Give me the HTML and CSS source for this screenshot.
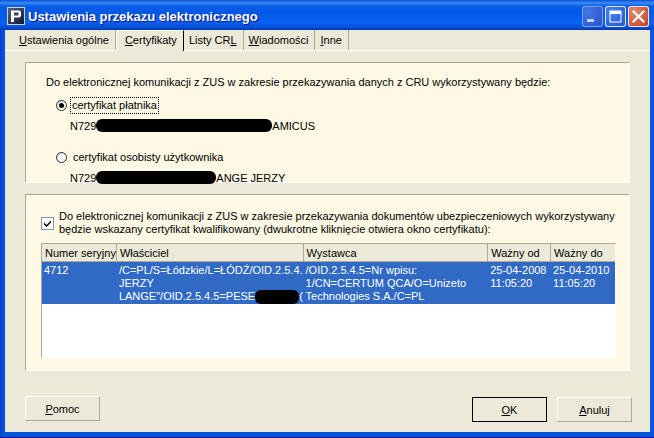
FILE: index.html
```
<!DOCTYPE html>
<html lang="pl">
<head>
<meta charset="utf-8">
<title>Ustawienia przekazu elektronicznego</title>
<link rel="stylesheet" href="styles.css">
</head>
<body>
<div class="window">
  <header class="titlebar">
    <svg class="app-icon" width="18" height="18" viewBox="0 0 18 18"><defs><linearGradient id="g" x1="0" y1="0" x2="1" y2="1"><stop offset="0" stop-color="#5a6a84"/><stop offset="1" stop-color="#0c1626"/></linearGradient></defs><rect x="0.5" y="0.5" width="17" height="17" fill="url(#g)" stroke="#c8d4ea"/><path d="M4 3.5h8.5l1.5 1.5v4l-1.5 1.5H7V15H4zM7 5.5v3h4.5v-3z" fill="#fff" fill-rule="evenodd"/></svg>
    <h1 class="title">Ustawienia przekazu elektronicznego</h1>
    <div class="controls">
      <span class="ctl ctl-min"><svg width="21" height="21" viewBox="0 0 21 21"><rect x="5" y="13" width="7" height="3" fill="#c3d0f2"/></svg></span>
      <span class="ctl ctl-max"><svg width="21" height="21" viewBox="0 0 21 21"><rect x="5" y="5" width="11" height="11" fill="none" stroke="#fff"/><rect x="5" y="5" width="11" height="3" fill="#fff"/></svg></span>
      <span class="ctl ctl-close"><svg width="21" height="21" viewBox="0 0 21 21"><path d="M5.5 5.5l10 10M15.5 5.5l-10 10" stroke="#fff" stroke-width="2.2" stroke-linecap="square"/></svg></span>
    </div>
  </header>
  <main class="client">
    <nav class="tabs">
      <span class="tab"><u>U</u>stawienia ogólne</span>
      <span class="tab tab-active"><u>C</u>ertyfikaty</span>
      <span class="tab">Listy CR<u>L</u></span>
      <span class="tab"><u>W</u>iadomości</span>
      <span class="tab"><u>I</u>nne</span>
    </nav>
    <div class="page">
      <section class="panel panel-top">
        <p class="lead">Do elektronicznej komunikacji z ZUS w zakresie przekazywania danych z CRU wykorzystywany będzie:</p>
        <div class="radio-row">
          <span class="radio radio-on"></span>
          <span class="focus">certyfikat płatnika</span>
        </div>
        <div class="cert">N729<span class="blot blot-a"></span>AMICUS</div>
        <div class="radio-row radio-row-2">
          <span class="radio"></span>
          <span class="plain">certyfikat osobisty użytkownika</span>
        </div>
        <div class="cert">N729<span class="blot blot-b"></span>ANGE JERZY</div>
      </section>
      <section class="panel panel-bottom">
        <div class="check-row">
          <span class="check"><svg width="9" height="9" viewBox="0 0 9 9"><path d="M1 3.5l2.5 2.5L8 1.5v2L3.5 8 1 5.5z" fill="#000"/></svg></span>
          <p class="check-text">Do elektronicznej komunikacji z ZUS w zakresie przekazywania dokumentów ubezpieczeniowych wykorzystywany<br>będzie wskazany certyfikat kwalifikowany (dwukrotne kliknięcie otwiera okno certyfikatu):</p>
        </div>
        <div class="list">
          <div class="list-head">
            <span class="th c1">Numer seryjny</span>
            <span class="th c2">Właściciel</span>
            <span class="th c3">Wystawca</span>
            <span class="th c4">Ważny od</span>
            <span class="th c5">Ważny do</span>
          </div>
          <div class="list-row">
            <span class="td c1">4712</span>
            <span class="td c2">/C=PL/S=Łódzkie/L=ŁÓDŹ/OID.2.5.4.<br>JERZY<br>LANGE"/OID.2.5.4.5=PESE<span class="blot blot-c"></span>(</span>
            <span class="td c3">/OID.2.5.4.5=Nr wpisu:<br>1/CN=CERTUM QCA/O=Unizeto<br>Technologies S.A./C=PL</span>
            <span class="td c4">25-04-2008<br>11:05:20</span>
            <span class="td c5">25-04-2010<br>11:05:20</span>
          </div>
        </div>
      </section>
      <footer class="buttons">
        <button class="btn"><u>P</u>omoc</button>
        <div class="buttons-right">
          <button class="btn btn-default"><u>O</u>K</button>
          <button class="btn"><u>A</u>nuluj</button>
        </div>
      </footer>
    </div>
  </main>
</div>
</body>
</html>
```
FILE: styles.css
```
* { box-sizing: border-box; }
html, body { margin: 0; padding: 0; }
body {
  width: 654px;
  height: 438px;
  overflow: hidden;
  font-family: "Liberation Sans", Arial, sans-serif;
  font-size: 11px;
  color: #000;
  background: #0831d9;
}
.window {
  width: 654px;
  height: 438px;
  display: flex;
  flex-direction: column;
  padding: 0 4px 5px 5px;
  background: linear-gradient(90deg, #0a3cd0 0, #0855dd 3px, #0855dd 100%);
  border-bottom: 1px solid #00138c;
}
.titlebar {
  height: 30px;
  margin: 0 -4px 0 -5px;
  padding: 0 5px 0 7px;
  display: flex;
  align-items: center;
  flex: none;
  background: linear-gradient(180deg, #0a50d8 0, #3a8cf4 3px, #0a5ce8 6px, #0058e6 14px, #0a62f0 22px, #0450d8 27px, #0238b0 30px);
}
.app-icon { flex: none; margin-top: 2px; }
.title {
  margin: 2px 0 0 3px;
  font-size: 13px;
  font-weight: bold;
  color: #fff;
  text-shadow: 1px 1px 1px #0f1089;
  flex: 1;
}
.controls { display: flex; gap: 2px; margin-top: 2px; }
.ctl {
  width: 21px;
  height: 21px;
  display: block;
  border: 0 solid #fff;
  border-radius: 3px;
  box-shadow: inset 0 0 0 1px #dfe8fb;
}
.ctl svg { display: block; }
.ctl-min { background: radial-gradient(circle at 30% 30%, #3f78ea, #2b50c8); box-shadow: inset 0 0 0 1px #7f9fe8; }
.ctl-max { background: radial-gradient(circle at 30% 30%, #4a84f0, #2150d0); }
.ctl-close { background: radial-gradient(circle at 30% 30%, #e6886c, #c1391a); }
.client {
  flex: 1;
  background: #ece9d8;
  display: flex;
  flex-direction: column;
  min-height: 0;
}
.tabs {
  height: 21px;
  flex: none;
  display: flex;
  align-items: stretch;
  padding-left: 9px;
  border-bottom: 1px solid #fff;
}
.tab {
  padding: 3px 6px 0 5px;
  border-right: 1px solid #aca899;
  white-space: nowrap;
  line-height: 14px;
}
.tab:last-child { border-right: 1px solid #aca899; }
.tab-active {
  background: #ece9d8;
  border-top: 1px solid #fff;
  border-left: 1px solid #fff;
  border-right: 1px solid #000;
  height: 21px;
  padding: 2px 6px 0 8px;
  margin-bottom: -1px;
}
.page {
  flex: 1;
  padding: 11px 0 0 20px;
  display: flex;
  flex-direction: column;
  min-height: 0;
}
.panel {
  width: 605px;
  flex: none;
  background: #fef9e4;
  border: 1px solid #aca899;
  border-right-color: #fff;
  border-bottom-color: #fff;
}
.panel-top { height: 121px; padding: 12px 0 0 20px; }
.panel-bottom { height: 177px; margin-top: 11px; padding: 15px 0 0 15px; }
.lead { margin: 0; line-height: 14px; }
.radio-row { display: flex; align-items: center; height: 16px; margin: 8px 0 0 10px; gap: 4px; }
.radio-row-2 { margin-top: 16px; }
.radio {
  width: 11px;
  height: 11px;
  border-radius: 50%;
  border: 1px solid #2b2b2b;
  background: #fff;
  flex: none;
  box-shadow: inset 1px 1px 0 #ddd;
  position: relative;
}
.radio-on::after {
  content: "";
  position: absolute;
  left: 2px;
  top: 2px;
  width: 5px;
  height: 5px;
  border-radius: 50%;
  background: #000;
}
.focus { outline: 1px dotted #000; padding: 0 1px; line-height: 15px; }
.plain { padding: 0 2px; line-height: 15px; }
.cert { margin: 6px 0 0 24px; line-height: 14px; height: 14px; white-space: nowrap; }
.blot {
  display: inline-block;
  height: 13px;
  background: #000;
  border-radius: 6px;
  vertical-align: top;
}
.blot-a { width: 176px; }
.blot-b { width: 120px; }
.blot-c { width: 44px; height: 14px; }
.check-row { display: flex; gap: 5px; }
.check {
  width: 13px;
  height: 13px;
  flex: none;
  margin-top: 7px;
  border: 1px solid #7f9db9;
  background: #fff;
  display: flex;
  align-items: center;
  justify-content: center;
}
.check svg { display: block; }
.check-text { margin: 0; line-height: 13px; white-space: nowrap; }
.list {
  width: 575px;
  height: 115px;
  margin-top: 7px;
  background: #fff;
  border: 1px solid #aca899;
  border-right-color: #fff;
  border-bottom-color: #fff;
}
.list-head { display: flex; height: 18px; background: #ece9d8; border-bottom: 1px solid #aca899; }
.list-row { display: flex; height: 42px; background: #316ac5; color: #fff; line-height: 13px; padding-top: 2px; }
.th { padding: 2px 0 0 3px; line-height: 14px; border-right: 1px solid #aca899; white-space: nowrap; }
.td { padding-left: 2px; white-space: nowrap; overflow: hidden; }
.c1 { width: 75px; }
.c2 { width: 187px; }
.c3 { width: 185px; }
.c4 { width: 63px; }
.c5 { width: 64px; border-right: 0; }
.buttons {
  display: flex;
  justify-content: space-between;
  width: 607px;
  margin-top: 25px;
  align-items: flex-start;
}
.buttons-right { display: flex; gap: 10px; margin-top: 1px; }
.btn {
  width: 75px;
  height: 25px;
  padding: 0;
  font: inherit;
  color: #000;
  background: #ece9d8;
  border: 1px solid;
  border-color: #fff #aca899 #aca899 #fff;
}
.btn-default { border-color: #000; }
```
